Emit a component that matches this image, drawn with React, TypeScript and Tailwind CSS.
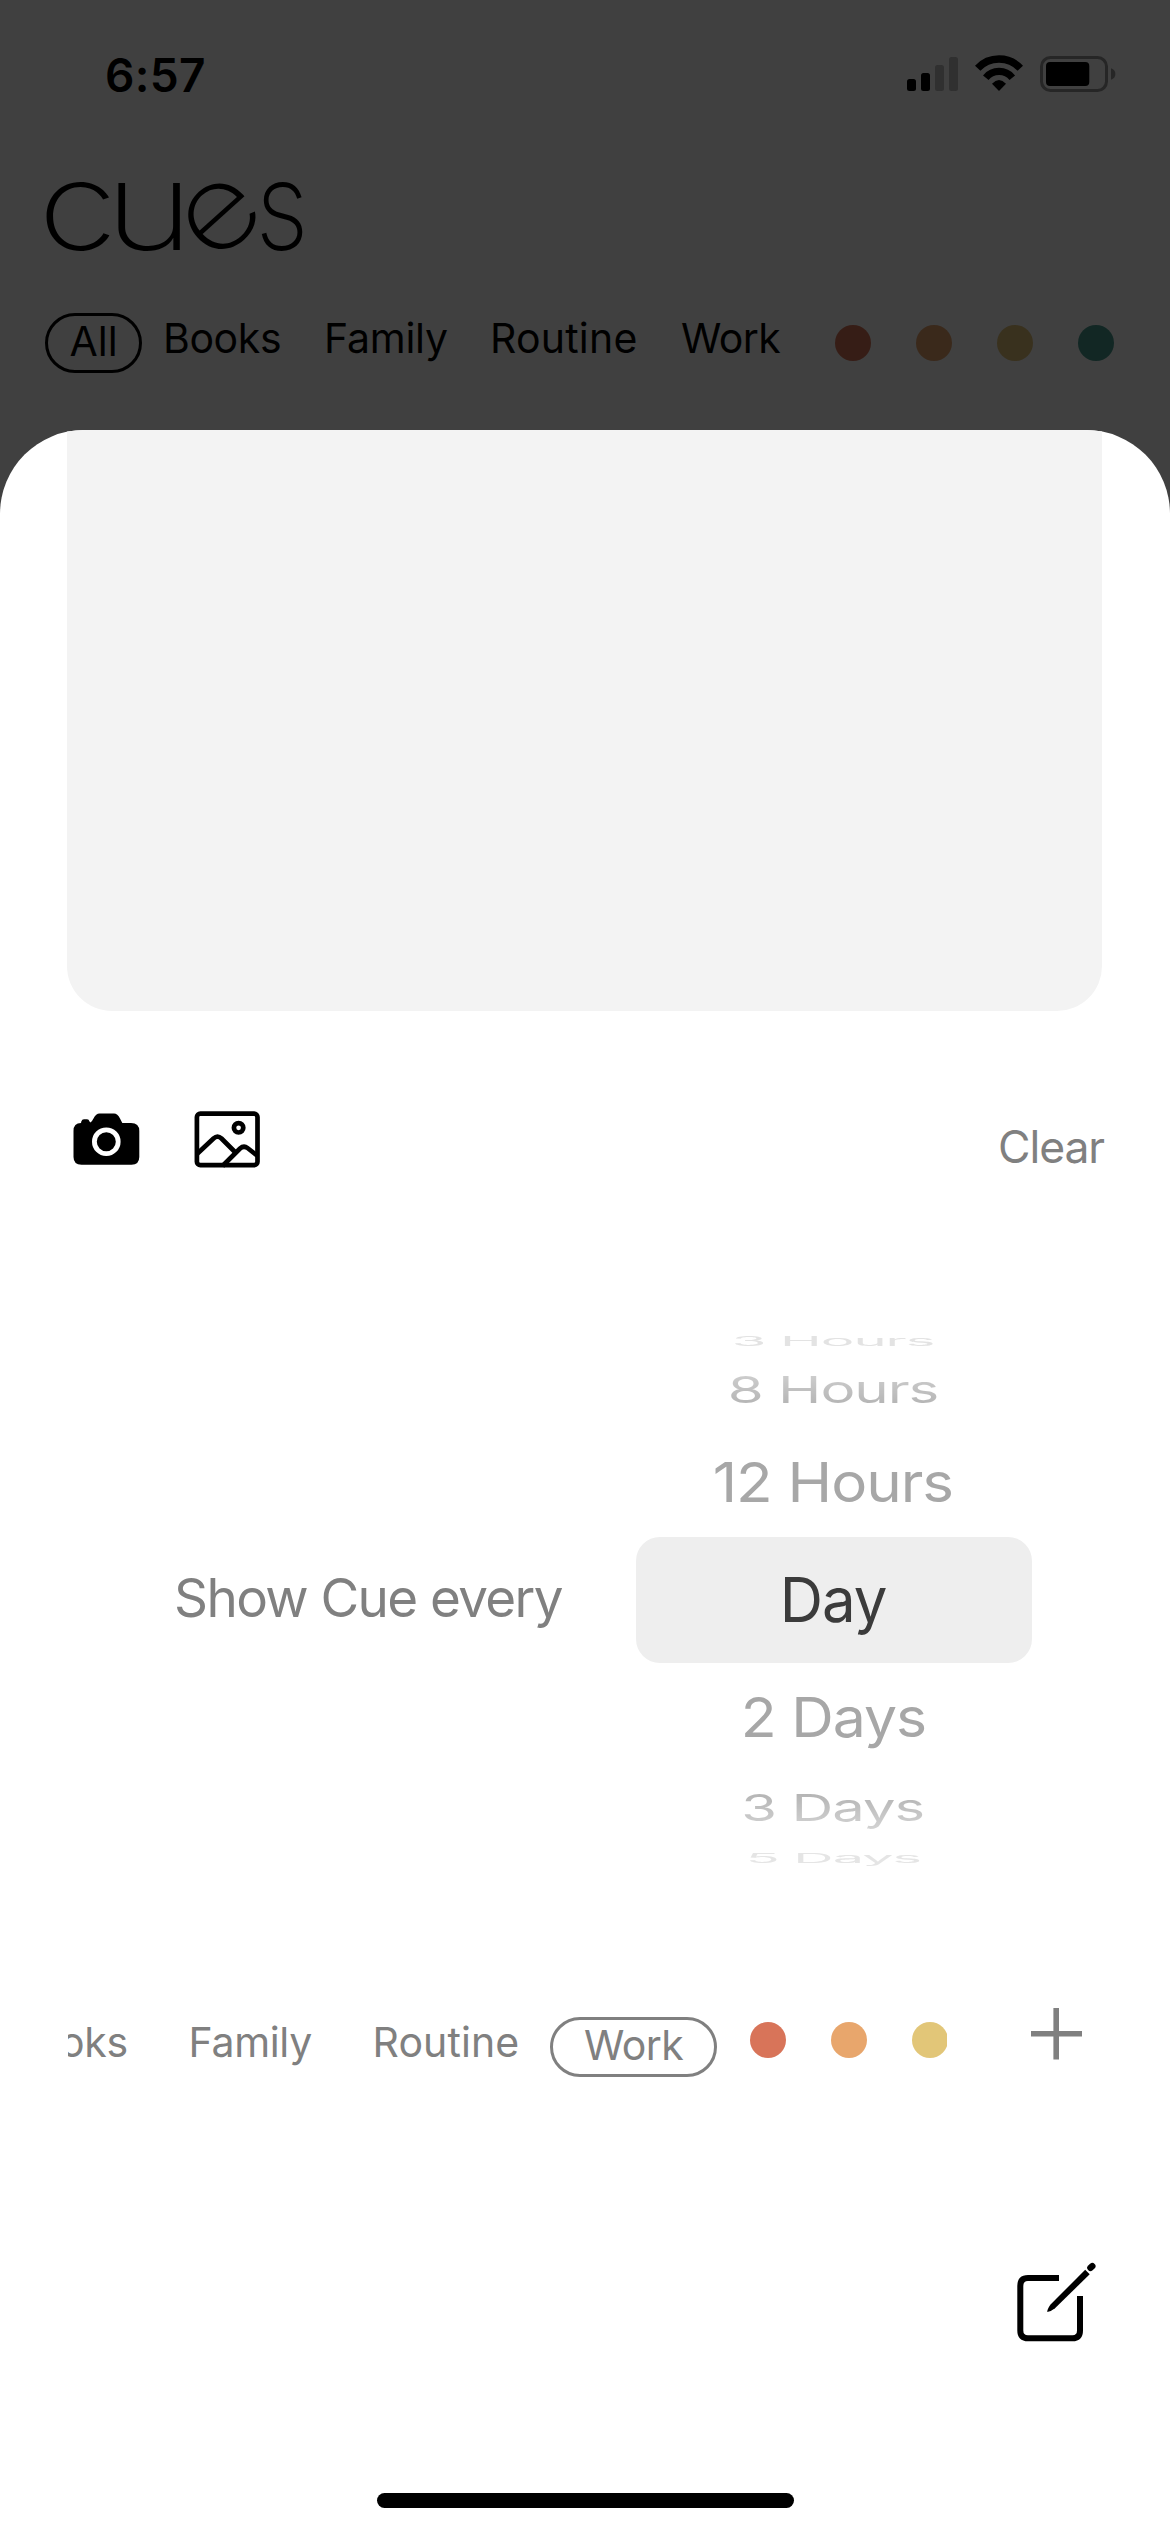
import React from "react";

const headerTabs = [
  { label: "Books", cls: "w-[161px] tracking-[-0.4px]" },
  { label: "Family", cls: "w-[166px] tracking-[-0.25px]" },
  { label: "Routine", cls: "w-[191px] tracking-[0.2px]" },
  { label: "Work", cls: "w-[154px] tracking-[-0.6px]" },
];

const headerDots = ["bg-[#361d16]", "bg-[#3a291b]", "bg-[#39311e]", "bg-[#122724]"];

const sheetTabs = [
  { label: "Books", cls: "w-[179px] tracking-[-0.4px]" },
  { label: "Family", cls: "w-[184px] tracking-[-0.3px]" },
  { label: "Routine", cls: "w-[177.5px] tracking-[0.1px]" },
];

const sheetDots = ["bg-[#d87459]", "bg-[#e8a66c]", "bg-[#e2c678]"];

const intervals = [
  { label: "3 Hours", row: "h-6", text: "leading-none scale-x-[0.905] scale-y-[0.21] text-[#e3e3e3]" },
  {
    label: "8 Hours",
    row: "h-[75px]",
    text: "leading-[84px] scale-x-[0.94] scale-y-[0.6] bg-linear-to-b from-[#d6d6d6] to-[#acacac] bg-clip-text text-transparent",
  },
  { label: "12 Hours", row: "h-[109px]", text: "leading-none scale-x-[0.97] scale-y-[0.89] text-[#a7a7a7]" },
  { label: "Day", row: "h-[126px] rounded-[24px] bg-[#eeeeee]", text: "leading-none scale-x-[0.967] text-[#3b3b3b]" },
  { label: "2 Days", row: "h-[108px]", text: "leading-none scale-x-[0.95] scale-y-[0.89] text-[#a7a7a7]" },
  {
    label: "3 Days",
    row: "h-[75px]",
    text: "leading-[84px] scale-x-[0.935] scale-y-[0.6] bg-linear-to-b from-[#acacac] to-[#d6d6d6] bg-clip-text text-transparent",
  },
  { label: "5 Days", row: "h-6", text: "leading-none scale-x-[0.9] scale-y-[0.21] text-[#e5e5e5]" },
];

function StatusBar() {
  return (
    <div className="flex h-36 items-center pt-1.5 pr-[54px] pl-[105px]">
      <span className="text-[46px] leading-none font-semibold tracking-[0.3px]">6:57</span>
      <svg className="ml-auto" width="52" height="40" viewBox="0 0 52 40">
        <rect x="0" y="24" width="9" height="12" rx="2.5" />
        <rect x="14" y="18" width="9" height="18" rx="2.5" />
        <rect x="28" y="10" width="9" height="26" rx="2.5" fill="#303030" />
        <rect x="42" y="2" width="9" height="34" rx="2.5" fill="#303030" />
      </svg>
      <svg className="ml-4" width="48" height="40" viewBox="0 0 48 40">
        <path d="M2.7 13.2A29.2 29.2 0 0 1 45.3 13.2" fill="none" stroke="#000" strokeWidth="7.4" />
        <path d="M10.8 22.7A17.2 17.2 0 0 1 37.3 22.7" fill="none" stroke="#000" strokeWidth="7.2" />
        <path d="M17 28.7Q24 21.5 31 28.7L24 36Z" />
      </svg>
      <svg className="ml-[17px]" width="76" height="40" viewBox="0 0 76 40">
        <rect x="1.5" y="2.5" width="65" height="33" rx="9" fill="none" stroke="#262626" strokeWidth="3" />
        <rect x="6" y="7" width="43.3" height="24" rx="4" />
        <path d="M71 13.3Q75.4 15 75.4 19T71 24.7Z" fill="#262626" />
      </svg>
    </div>
  );
}

function Wordmark() {
  return (
    <h1 className="flex h-[123px] pl-[47px] text-[123px] leading-none font-[150]">
      <span className="flex w-[73px] justify-center pr-[12px]">
        <span className="scale-x-[1.18]">c</span>
      </span>
      <span className="flex w-[71px] justify-center pr-[12px]">
        <span className="scale-x-[1.23]">u</span>
      </span>
      <span className="flex w-[71px] justify-center pr-[13px]">
        <span className="origin-[50%_59%] [transform:rotate(-42deg)_scale(1.1,0.95)]">e</span>
      </span>
      <span className="flex w-[41px] justify-center">
        <span className="scale-x-[0.86]">s</span>
      </span>
    </h1>
  );
}

function HeaderTabs() {
  return (
    <nav className="mt-[46px] flex h-[60px] items-start pl-[45px] text-[41px] leading-none">
      <span className="mr-[21px] flex h-[60px] w-[97px] items-center justify-center rounded-full border-[3px] border-black pb-1">
        All
      </span>
      {headerTabs.map((t) => (
        <span key={t.label} className={`mt-[4.5px] shrink-0 whitespace-nowrap ${t.cls}`}>
          {t.label}
        </span>
      ))}
      <span className="mt-3 flex gap-[45px]">
        {headerDots.map((c) => (
          <span key={c} className={`size-9 rounded-full ${c}`} />
        ))}
      </span>
    </nav>
  );
}

function AttachmentRow() {
  return (
    <div className="mt-[100px] flex h-[60px] items-start pr-[66px] pl-[73px]">
      <svg className="mt-[2px]" width="67" height="52" viewBox="0 0 67 52">
        <path d="M.5 18Q.5 10 8 10L8.3 8.5Q9 6.3 11 6.3H14Q16 6.3 16.5 8.5L17.5 9.5Q19 8.5 20.5 5.5Q23 .4 26.5 .4H41Q44.5 .4 47 5.5L49.3 10H58Q66.3 10 66.3 18V44Q66.3 51.7 58.5 51.7H8.5Q.5 51.7 .5 44Z" />
        <circle cx="33.3" cy="28.7" r="11.9" fill="none" stroke="#fff" strokeWidth="4.8" />
      </svg>
      <svg className="ml-[53.5px]" width="67" height="57" viewBox="0 0 67 57" fill="none" stroke="#000" strokeWidth="4.7">
        <rect x="2.9" y="2.6" width="60.6" height="51.6" rx="3.5" />
        <circle cx="44.6" cy="16.8" r="4.7" />
        <path d="M3.5 42.5L19.5 27.5Q23.5 23.8 27.5 27.5L41 41" />
        <path d="M28.5 55L46 37.5Q49.8 34.2 53.5 37L63 44.5" />
      </svg>
      <span className="mt-[14px] ml-auto text-[44.5px] leading-none tracking-[-1.1px] text-[#808080]">Clear</span>
    </div>
  );
}

function IntervalPicker() {
  return (
    <div className="mt-[157.5px] flex items-center pl-[174px]">
      <span className="w-[462px] pb-[2px] text-[53px] leading-none tracking-[-1.6px] whitespace-nowrap text-[#808080]">
        Show Cue every
      </span>
      <div className="flex w-[396px] flex-col">
        {intervals.map((i) => (
          <div key={i.label} className={`flex items-center justify-center ${i.row}`}>
            <span className={`mr-[2px] shrink-0 text-[62px] tracking-[-1.1px] whitespace-nowrap ${i.text}`}>
              {i.label}
            </span>
          </div>
        ))}
      </div>
    </div>
  );
}

function TagRow() {
  return (
    <div className="mt-[138.5px] flex h-[69px] items-start pl-[67.5px] text-[#808080]">
      <div className="flex h-[69px] w-[879.5px] items-start overflow-hidden text-[41px] leading-none">
        <div className="-ml-[58px] flex shrink-0 items-start">
          {sheetTabs.map((t) => (
            <span key={t.label} className={`mt-[14px] shrink-0 whitespace-nowrap ${t.cls}`}>
              {t.label}
            </span>
          ))}
          <span className="mt-[9px] flex h-[60px] w-[167px] shrink-0 items-center justify-center rounded-full border-[3px] border-[#808080] pb-[3px] tracking-[-0.6px]">
            Work
          </span>
          <span className="mt-[14px] ml-[33px] flex gap-[45px]">
            {sheetDots.map((c) => (
              <span key={c} className={`size-9 rounded-full ${c}`} />
            ))}
          </span>
        </div>
      </div>
      <svg className="ml-[84px]" width="51" height="52" viewBox="0 0 51 52" stroke="#808080" strokeWidth="5.6">
        <path d="M25.2 0V51.5M0 25.7H51" />
      </svg>
    </div>
  );
}

export default function App() {
  return (
    <div className="h-[2532px] w-[1170px] overflow-hidden bg-[#404040] font-['Inter',sans-serif] text-black">
      <StatusBar />
      <Wordmark />
      <HeaderTabs />
      <main className="mt-[57px] h-[2102px] overflow-hidden rounded-t-[84px] bg-white">
        <div className="mr-[68px] ml-[67px] h-[581px] rounded-b-[45px] bg-[#f3f3f3]" />
        <AttachmentRow />
        <IntervalPicker />
        <TagRow />
        <svg className="mt-[185px] ml-[1016px]" width="84" height="84" viewBox="0 0 84 84" fill="none" stroke="#000">
          <path d="M43 16H12Q4.3 16 4.3 24V68.5Q4.3 76.3 12 76.3H56.5Q64 76.3 64 68.5V34" strokeWidth="6" />
          <path d="M69.2 7.8L73.7 12.3L39 46.2Q35 49.5 31.2 50Q31.3 46.5 34.8 42.2Z" fill="#000" stroke="none" />
          <path d="M74.4 5.9L76.3 4.1" strokeWidth="6.4" strokeLinecap="round" />
        </svg>
        <div className="mx-auto mt-[147px] h-[14.5px] w-[417px] rounded-full bg-black" />
      </main>
    </div>
  );
}
